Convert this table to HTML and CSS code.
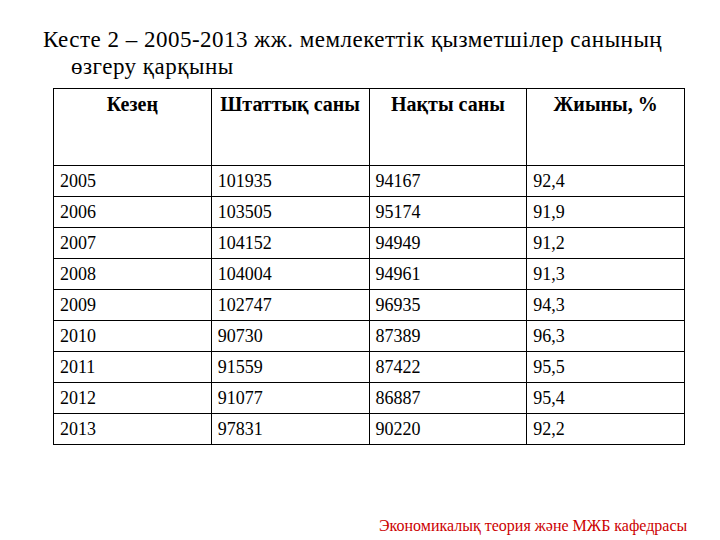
FILE: index.html
```html
<!DOCTYPE html>
<html lang="kk">
<head>
<meta charset="utf-8">
<title>Кесте 2</title>
<link rel="stylesheet" href="styles.css">
</head>
<body>
<div class="slide">
  <h1 class="title">Кесте 2 – 2005-2013 жж. мемлекеттік қызметшілер санының өзгеру қарқыны</h1>
  <table class="data">
    <thead>
      <tr><th>Кезең</th><th>Штаттық саны</th><th>Нақты саны</th><th>Жиыны, %</th></tr>
    </thead>
    <tbody>
      <tr><td>2005</td><td>101935</td><td>94167</td><td>92,4</td></tr>
      <tr><td>2006</td><td>103505</td><td>95174</td><td>91,9</td></tr>
      <tr><td>2007</td><td>104152</td><td>94949</td><td>91,2</td></tr>
      <tr><td>2008</td><td>104004</td><td>94961</td><td>91,3</td></tr>
      <tr><td>2009</td><td>102747</td><td>96935</td><td>94,3</td></tr>
      <tr><td>2010</td><td>90730</td><td>87389</td><td>96,3</td></tr>
      <tr><td>2011</td><td>91559</td><td>87422</td><td>95,5</td></tr>
      <tr><td>2012</td><td>91077</td><td>86887</td><td>95,4</td></tr>
      <tr><td>2013</td><td>97831</td><td>90220</td><td>92,2</td></tr>
    </tbody>
  </table>
  <div class="footer">Экономикалық теория және МЖБ кафедрасы</div>
</div>
</body>
</html>
```
FILE: styles.css
```css
html, body {
  margin: 0;
  padding: 0;
  background: #ffffff;
}
.slide {
  width: 720px;
  height: 540px;
  position: relative;
  font-family: "Liberation Serif", "Times New Roman", serif;
  color: #000;
  overflow: hidden;
}
.title {
  margin: 0;
  width: 625px;
  padding: 26px 0 0 71px;
  text-indent: -28px;
  font-size: 23px;
  letter-spacing: 0.5px;
  line-height: 27px;
  font-weight: normal;
}
.data {
  margin: 8px 0 0 53px;
  border-collapse: collapse;
  width: 632px;
  table-layout: fixed;
  font-size: 18px;
}
.data th, .data td {
  border: 1.5px solid #000;
  width: 25%;
}
.data th {
  height: 72px;
  vertical-align: top;
  text-align: center;
  font-weight: bold;
  font-size: 20px;
  padding: 4px 2px 0;
  line-height: 22px;
}
.data td {
  height: 30px;
  padding: 0 6px;
  line-height: 20px;
  vertical-align: middle;
}
.footer {
  position: absolute;
  left: 379px;
  top: 516px;
  font-size: 16px;
  color: #cc0000;
  line-height: 20px;
}
```
